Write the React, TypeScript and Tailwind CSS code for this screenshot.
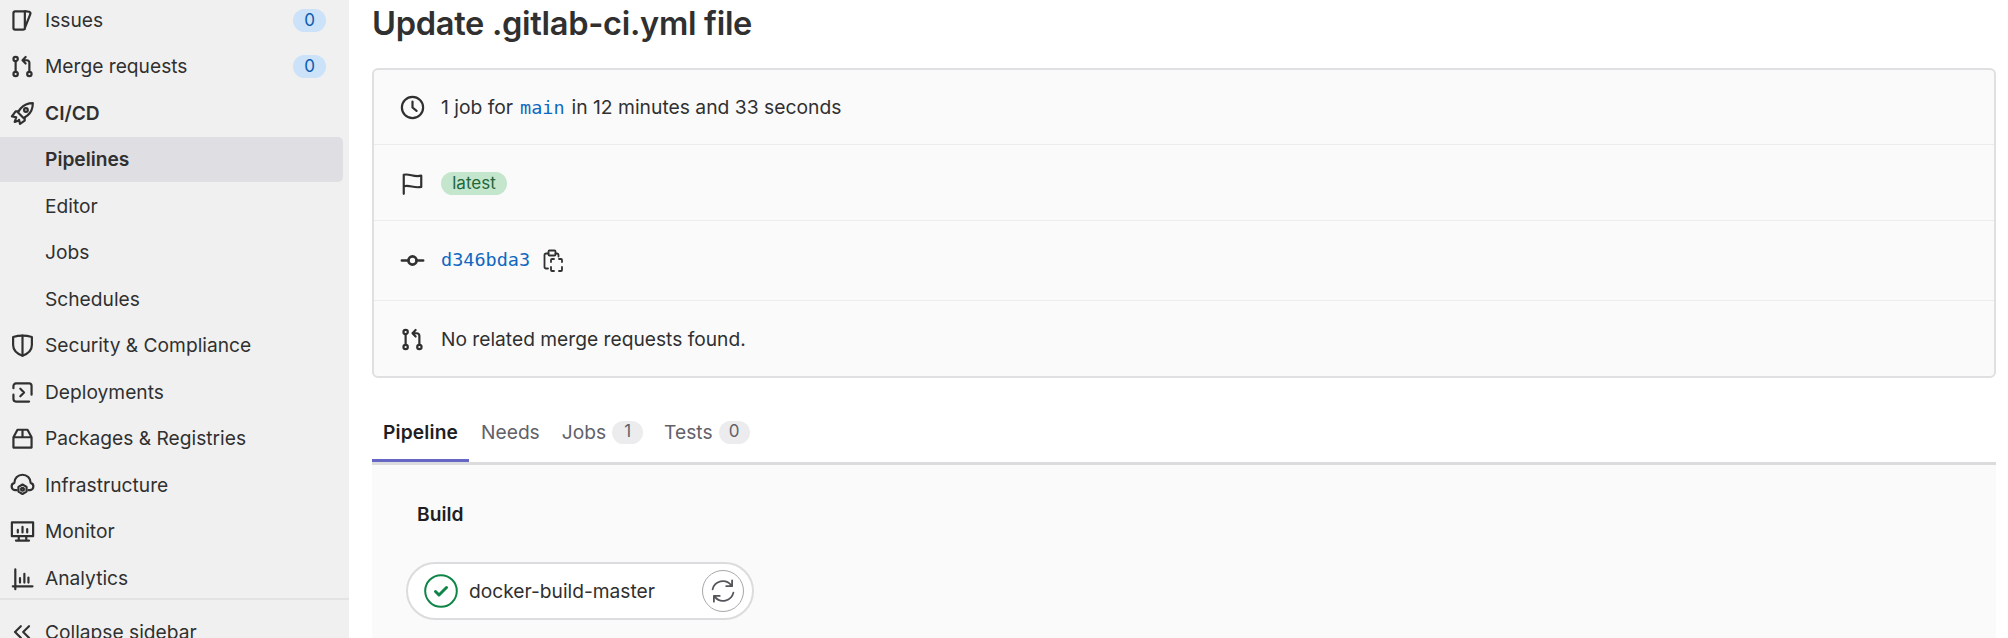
import type { ReactNode } from "react";
import { ChevronsLeft } from "lucide-react";

function Ico({ children, className = "w-[25px] h-[25px]", width = "1.4" }: { children: ReactNode; className?: string; width?: string }) {
  return (
    <svg viewBox="0 0 16 16" fill="none" stroke="currentColor" strokeWidth={width} strokeLinecap="round" strokeLinejoin="round" className={className}>
      {children}
    </svg>
  );
}

const IssuesIcon = () => (
  <Ico>
    <path d="M9.5 2.2H3.2a1 1 0 0 0-1 1v9.6a1 1 0 0 0 1 1h5.2a1 1 0 0 0 1-.7l3.6-9.2c.2-.5-.2-1.2-.8-1.5L9.5 2v11.5" />
  </Ico>
);
const MergeIcon = () => (
  <Ico>
    <circle cx="3.6" cy="3.2" r="1.4" />
    <circle cx="3.6" cy="12.8" r="1.4" />
    <circle cx="12.4" cy="12.8" r="1.4" />
    <path d="M3.6 4.6v6.8M12.4 11.4V5.6a1.6 1.6 0 0 0-1.6-1.6H8.4M10 1.9 8 4l2 2.1" />
  </Ico>
);
const RocketIcon = () => (
  <Ico>
    <path d="M14.6 1.4c-3.4 0-6 1.4-7.8 3.4L5 7.2 8.8 11l2.4-1.8c2.2-1.8 3.4-4.4 3.4-7.8Z" />
    <circle cx="10.2" cy="5.8" r="1.2" />
    <path d="M5.4 6.6H3.6L1.2 9.8l2.8.6M9.4 10.6v2l-3 2-.6-2.6M4 10.4l-1 3 2.8-1" />
  </Ico>
);
const ShieldIcon = () => (
  <Ico>
    <path d="M2 2.6C4 2 6 1.7 8 1.7s4 .3 6 .9v5c0 3.2-2.6 5.6-6 6.9-3.4-1.3-6-3.7-6-6.9v-5Z" />
    <path d="M8 1.7V14.5" />
  </Ico>
);
const DeployIcon = () => (
  <Ico>
    <path d="M2.2 9.4v2.8a1.6 1.6 0 0 0 1.6 1.6h8.4M13.8 9.4V3.8a1.6 1.6 0 0 0-1.6-1.6H3.8a1.6 1.6 0 0 0-1.6 1.6v1.4M6.6 5.6 9 8 6.6 10.4" />
  </Ico>
);
const PackageIcon = () => (
  <Ico>
    <path d="M2.2 7.2h11.6v6.6H2.2V7.2ZM2.2 7.2 4.8 2.4h6.4l2.6 4.8M8 2.4v4.8" />
  </Ico>
);
const InfraIcon = () => (
  <Ico>
    <path d="M4.2 11H3.2a2.4 2.4 0 0 1-.4-4.7 5.2 5.2 0 0 1 10.4 0 2.4 2.4 0 0 1-.4 4.7h-1" />
    <path d="M8 7.4l2.6 1.5v3L8 13.4l-2.6-1.5v-3L8 7.4Z" />
    <circle cx="8" cy="10.4" r=".9" />
  </Ico>
);
const MonitorIcon = () => (
  <Ico>
    <path d="M1.2 2.2h13.6v8.8H1.2V2.2ZM5.6 11v2.8M10.4 11v2.8M3.8 13.8h8.4M5 8.6V7M8 8.6V5M11 8.6V6.4" />
  </Ico>
);
const AnalyticsIcon = () => (
  <Ico>
    <path d="M3.4 2.2v12.6M1.8 13h12.6M6.4 10.6V7.8M9.2 10.6V5M11.8 10.6V7.4" />
  </Ico>
);
const ClockIcon = () => (
  <Ico>
    <circle cx="8" cy="8" r="6.8" />
    <path d="M8 4.2V8l2.6 2.2" />
  </Ico>
);
const FlagIcon = () => (
  <Ico>
    <path d="M2.4 14.6V2.4c3.8-1 6.2 1.8 11.2.6v7.2c-5 1-7.4-1.6-11.2-.4" />
  </Ico>
);
const CommitIcon = () => (
  <Ico width="1.7">
    <circle cx="8" cy="8" r="2.6" />
    <path d="M1.2 8h4.2M10.6 8h4.2" />
  </Ico>
);
const ClipboardIcon = () => (
  <svg viewBox="0 0 20 23" fill="none" stroke="currentColor" strokeWidth="1.8" strokeLinecap="round" strokeLinejoin="round" className="w-[20px] h-[23px]">
    <path d="M5 19.5H3a1.5 1.5 0 0 1-1.5-1.5V6A1.5 1.5 0 0 1 3 4.5h2.5M12.5 4.5H14A1.5 1.5 0 0 1 15.5 6v1.5" />
    <rect x="5.5" y="1.5" width="7" height="5" rx="1" />
    <path d="M8 13v-2a1 1 0 0 1 1-1h2M16 10h2a1 1 0 0 1 1 1v2M19 18v3a1 1 0 0 1-1 1h-2M11 22H9a1 1 0 0 1-1-1v-3" />
  </svg>
);

function SideItem({ label, icon, bold, badge, active }: { label: string; icon?: ReactNode; bold?: boolean; badge?: string; active?: boolean }) {
  return (
    <div className="h-[46.5px] shrink-0 flex items-center pr-[6px]">
      <div className={`flex-1 h-[45px] flex items-center rounded-r-[5px] ${active ? "bg-[#dfdee3] font-semibold" : ""} ${bold ? "font-semibold" : ""}`}>
        <span className="w-[45px] shrink-0 pl-[9.5px] flex text-[#303030]">{icon}</span>
        <span className="flex-1">{label}</span>
        {badge && (
          <span className="w-[33px] h-[23px] mr-[17px] rounded-full bg-[#cbe2f9] text-[#0b5cad] text-[17px] flex items-center justify-center">{badge}</span>
        )}
      </div>
    </div>
  );
}

function InfoRow({ icon, children, className }: { icon: ReactNode; children: ReactNode; className: string }) {
  return (
    <div className={`flex items-center pl-[25.5px] border-b border-[#ececef] last:border-b-0 ${className}`}>
      <span className="w-[41.5px] shrink-0 flex text-[#303030]">{icon}</span>
      {children}
    </div>
  );
}

function Tab({ label, count, active, className = "" }: { label: string; count?: string; active?: boolean; className?: string }) {
  return (
    <div className={`h-[52px] flex items-center px-[11px] pb-[5px] -mb-[3px] border-b-[3px] ${active ? "border-[#6666c4] text-[#1f1e24] font-semibold tracking-[0.15px]" : "border-transparent text-[#626168]"} ${className}`}>
      {label}
      {count && <span className="ml-[6px] w-[31px] h-[23px] rounded-full bg-[#ececef] text-[17px] flex items-center justify-center">{count}</span>}
    </div>
  );
}

export default function App() {
  return (
    <div className="h-[638px] w-[2008px] overflow-hidden flex bg-white text-[#303030] text-[19.2px] font-['Inter',sans-serif]">
      <aside className="w-[349px] shrink-0 h-[638px] overflow-hidden bg-[#f0f0f0] flex flex-col">
        <div className="-mt-[3px] flex flex-col">
          <SideItem label="Issues" icon={<IssuesIcon />} badge="0" />
          <SideItem label="Merge requests" icon={<MergeIcon />} badge="0" />
          <SideItem label="CI/CD" icon={<RocketIcon />} bold />
          <SideItem label="Pipelines" active />
          <SideItem label="Editor" />
          <SideItem label="Jobs" />
          <SideItem label="Schedules" />
          <SideItem label="Security & Compliance" icon={<ShieldIcon />} />
          <SideItem label="Deployments" icon={<DeployIcon />} />
          <SideItem label="Packages & Registries" icon={<PackageIcon />} />
          <SideItem label="Infrastructure" icon={<InfraIcon />} />
          <SideItem label="Monitor" icon={<MonitorIcon />} />
          <SideItem label="Analytics" icon={<AnalyticsIcon />} />
        </div>
        <div className="-mt-[4px] border-t-2 border-[#e3e3e3] h-[60px] shrink-0 flex items-start pt-[18px]">
          <span className="w-[45px] pl-[8px] flex"><ChevronsLeft className="w-[28px] h-[28px]" strokeWidth={1.8} /></span>
          Collapse sidebar
        </div>
      </aside>
      <main className="flex-1 pl-[23px] pr-[12px] min-w-0">
        <h1 className="h-[68px] pt-[1px] text-[32.6px] leading-[44px] font-semibold tracking-[-0.3px] text-[#303030]">Update .gitlab-ci.yml file</h1>
        <div className="h-[310px] border-2 border-[#e0e0e2] rounded-[6px] bg-[#fafafa] flex flex-col">
          <InfoRow icon={<ClockIcon />} className="h-[75px]">
            <span className="text-[19.3px]">1 job for <span className="mx-[1.5px] font-['DejaVu_Sans_Mono',monospace] text-[18.5px] text-[#1068bf]">main</span> in 12 minutes and 33 seconds</span>
          </InfoRow>
          <InfoRow icon={<FlagIcon />} className="h-[76px] pt-[2px]">
            <span className="h-[23px] w-[66px] rounded-full bg-[#c3e6cd] text-[#24663b] text-[17px] flex items-center justify-center">latest</span>
          </InfoRow>
          <InfoRow icon={<CommitIcon />} className="h-[80px] pb-[1px]">
            <span className="font-['DejaVu_Sans_Mono',monospace] text-[18.5px] text-[#1068bf]">d346bda3</span>
            <span className="ml-[13px] flex"><ClipboardIcon /></span>
          </InfoRow>
          <InfoRow icon={<MergeIcon />} className="flex-1 pt-[2px]">
            No related merge requests found.
          </InfoRow>
        </div>
        <div className="mt-[32px] flex border-b-[3px] border-[#dcdcde] h-[55px]">
          <Tab label="Pipeline" active />
          <Tab label="Needs" className="ml-[1px]" />
          <Tab label="Jobs" count="1" />
          <Tab label="Tests" count="0" className="-ml-[1px]" />
        </div>
        <div className="h-[200px] bg-[#fafafa] pl-[34px] pt-[35px]">
          <div className="font-semibold text-[#1f1e24] leading-[28px] pl-[11px]">Build</div>
          <div className="mt-[34px] w-[348px] h-[58px] rounded-full border-2 border-[#dcdcde] bg-white flex items-center pl-[16px] pr-[8px]">
            <svg viewBox="0 0 34 34" className="w-[34px] h-[34px] shrink-0" fill="none">
              <circle cx="17" cy="17" r="15.8" stroke="#108548" strokeWidth="2" />
              <path d="M11.5 17.5 15 21l7.5-7.5" stroke="#108548" strokeWidth="3" strokeLinecap="round" strokeLinejoin="round" />
            </svg>
            <span className="ml-[11px] flex-1 text-[#303030]">docker-build-master</span>
            <span className="w-[42px] h-[42px] rounded-full border border-[#a8a8ac] flex items-center justify-center text-[#55545a]">
              <svg viewBox="0 0 16 16" fill="none" stroke="currentColor" strokeWidth="1.1" strokeLinecap="round" strokeLinejoin="round" className="w-[26px] h-[26px]">
                <path d="M1.6 7A6.5 6.5 0 0 1 13 4.4M14.4 9A6.5 6.5 0 0 1 3 11.6M13.6 1.4V5H10M2.4 14.6V11H6" />
              </svg>
            </span>
          </div>
        </div>
      </main>
    </div>
  );
}
